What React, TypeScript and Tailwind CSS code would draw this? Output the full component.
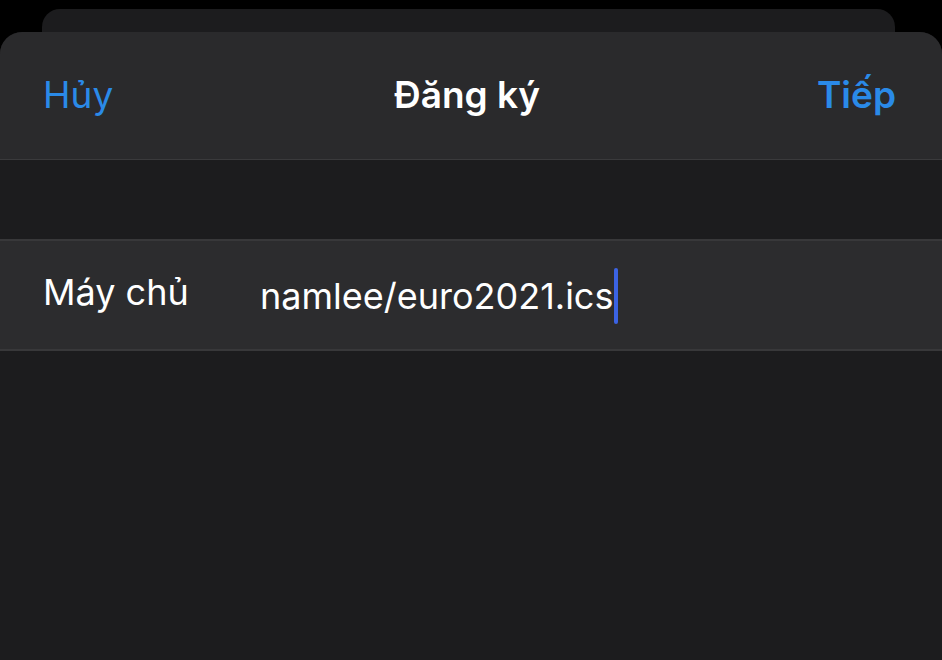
export default function App() {
  return (
    <div className="relative h-[660px] w-[942px] overflow-hidden bg-black font-['Inter','Noto_Sans',sans-serif]">
      {/* stacked sheet behind */}
      <div className="absolute left-[42px] right-[47px] top-[9px] h-[60px] rounded-t-[18px] bg-[#1c1c1e]" />
      <div className="absolute inset-x-0 bottom-0 top-[32px] flex flex-col rounded-t-[22px] bg-[#1c1c1e]">
        <header className="flex h-[128px] items-center justify-between rounded-t-[22px] border-b border-[#3a3a3c] bg-[#2a2a2c] pl-[43px] pr-[46px] pb-[2px]">
          <button className="text-[37px] text-[#2a8ae8]">Hủy</button>
          <h1 className="ml-[4px] text-[37px] font-semibold text-white">Đăng ký</h1>
          <button className="text-[37px] font-semibold text-[#2a8ae8]">Tiếp</button>
        </header>
        <div className="h-[79px]" />
        <div className="flex h-[112px] items-center border-y-2 border-[#38383a] bg-[#2c2c2e] pl-[43px]">
          <span className="w-[217px] text-[36px] text-white -mt-[6px]">Máy chủ</span>
          <div className="flex items-center mt-[2px]">
            <span className="text-[36px] text-white">namlee/euro2021.ics</span>
            <span className="ml-[1px] h-[56px] w-[4px] rounded-full bg-[#3b63e3]" />
          </div>
        </div>
      </div>
    </div>
  );
}
